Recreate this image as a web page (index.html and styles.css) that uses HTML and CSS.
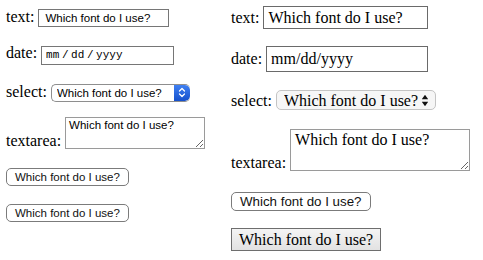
FILE: index.html
```html
<!DOCTYPE html>
<html lang="en">
<head>
    <meta charset="UTF-8">
    <meta name="viewport" content="width=device-width, initial-scale=1.0">
    <title>Which font do I use?</title>
    <link rel="stylesheet" href="styles.css">
</head>
<body>
    <div class="demo">
        <!-- left: controls with their own font -->
        <form class="col col-default">
            <div class="row">
                <label for="d-text">text:</label>
                <input type="text" id="d-text" class="field field-text" value="Which font do I use?">
            </div>
            <div class="row">
                <label for="d-date">date:</label>
                <input type="text" id="d-date" class="field field-date" value="mm / dd / yyyy">
            </div>
            <div class="row">
                <label for="d-select">select:</label>
                <span class="select">
                    <select id="d-select">
                        <option>Which font do I use?</option>
                    </select>
                    <span class="stepper">
                        <svg width="8" height="11" viewBox="0 0 8 11">
                            <path d="M1.5 4 L4 1.5 L6.5 4 M1.5 7 L4 9.5 L6.5 7" fill="none" stroke="#fff" stroke-width="1.3" stroke-linecap="round" stroke-linejoin="round"/>
                        </svg>
                    </span>
                </span>
            </div>
            <div class="row row-area">
                <label for="d-area">textarea:</label>
                <textarea id="d-area" class="area">Which font do I use?</textarea>
            </div>
            <div class="row">
                <button type="button" class="btn">Which font do I use?</button>
            </div>
            <div class="row">
                <button type="button" class="btn">Which font do I use?</button>
            </div>
        </form>

        <!-- right: controls inherit the page font -->
        <form class="col col-inherit">
            <div class="row">
                <label for="i-text">text:</label>
                <input type="text" id="i-text" class="field field-text" value="Which font do I use?">
            </div>
            <div class="row">
                <label for="i-date">date:</label>
                <input type="text" id="i-date" class="field field-date" value="mm/dd/yyyy">
            </div>
            <div class="row">
                <label for="i-select">select:</label>
                <span class="select">
                    <select id="i-select">
                        <option>Which font do I use?</option>
                    </select>
                    <span class="stepper">
                        <svg width="8" height="13" viewBox="0 0 8 13">
                            <path d="M0.8 5.3 L4 0.8 L7.2 5.3 Z M0.8 7.7 L4 12.2 L7.2 7.7 Z" fill="#111"/>
                        </svg>
                    </span>
                </span>
            </div>
            <div class="row row-area">
                <label for="i-area">textarea:</label>
                <textarea id="i-area" class="area">Which font do I use?</textarea>
            </div>
            <div class="row">
                <button type="button" class="btn">Which font do I use?</button>
            </div>
            <div class="row">
                <button type="button" class="btn btn-plain">Which font do I use?</button>
            </div>
        </form>
    </div>
</body>
</html>
```

FILE: styles.css
```css
body {
    margin: 0;
    font-family: "Liberation Serif", "Times New Roman", serif;
    font-size: 16px;
    color: #000;
    background-color: #fff;
}

.demo {
    display: flex;
}

.col {
    display: flex;
    flex-direction: column;
    margin: 0;
}

.col-default {
    width: 225px;
    padding: 9px 0 0 6px;
}

.col-inherit {
    padding: 6px 0 0 0;
}

.row {
    display: flex;
    align-items: baseline;
    gap: 4px;
}

.row-area {
    align-items: flex-end;
}

label {
    line-height: 16px;
}

/* shared control bits */
.field,
.area,
.select,
.btn {
    box-sizing: border-box;
    margin: 0;
    color: #000;
    background-color: #fff;
    outline: none;
}

.field {
    border: 1px solid #767676;
    border-radius: 0;
}

.area {
    border: 1px solid #9a9a9a;
    resize: both;
}

.select {
    display: inline-flex;
    align-items: stretch;
    border-radius: 5px;
    overflow: hidden;
}

.select select {
    flex: 1;
    appearance: none;
    -webkit-appearance: none;
    border: none;
    margin: 0;
    background: transparent;
    color: #000;
    outline: none;
}

.stepper {
    display: flex;
    align-items: center;
    justify-content: center;
}

.btn {
    border: 1px solid #7b7b7b;
    border-radius: 5px;
    padding: 0 8px;
    color: #111;
}

/* left column: small system-ish font */
.col-default .field,
.col-default .area,
.col-default select,
.col-default .btn {
    font-family: "Liberation Sans", Arial, sans-serif;
    font-size: 11.5px;
}

.col-default .row + .row {
    margin-top: 18px;
}

.col-default .row:nth-child(3) {
    margin-top: 19px;
}

.col-default .row:nth-child(4) {
    margin-top: 15px;
}

.col-default .row:nth-child(5) {
    margin-top: 19px;
}

.col-default .field-text {
    width: 131px;
    height: 18px;
    padding: 0 0 0 6px;
}

.col-default .field-date {
    width: 133px;
    height: 19px;
    padding: 0 0 0 4px;
    font-family: "Liberation Mono", "Courier New", monospace;
    font-size: 11px;
    word-spacing: -4px;
}

.col-default .select {
    width: 139px;
    height: 18px;
    border: 1px solid #8e8e8e;
    border-right: none;
}

.col-default .select select {
    padding: 0 0 0 5px;
}

.col-default .stepper {
    width: 16px;
    background: linear-gradient(#3f80f2, #1550cc);
    border-radius: 0 5px 5px 0;
}

.col-default .area {
    width: 140px;
    height: 32px;
    padding: 1px 3px;
}

.col-default .btn {
    height: 18px;
}

/* right column: controls take the serif font */
.col-inherit .field,
.col-inherit .area,
.col-inherit select {
    font-family: inherit;
    font-size: 16px;
}

.col-inherit .btn {
    font-family: "Liberation Sans", Arial, sans-serif;
    font-size: 13.33px;
    height: 19px;
}

.col-inherit .row + .row {
    margin-top: 17px;
}

.col-inherit .row:nth-child(3) {
    margin-top: 18px;
}

.col-inherit .row:nth-child(4) {
    margin-top: 19px;
}

.col-inherit .row:nth-child(5) {
    margin-top: 21px;
}

.col-inherit .field {
    border-color: #6a6a6a;
}

.col-inherit .field-text {
    width: 165px;
    height: 23px;
    padding: 0 0 0 4px;
}

.col-inherit .field-date {
    width: 162px;
    height: 26px;
    padding: 0 0 0 4px;
}

.col-inherit .select {
    width: 160px;
    height: 20px;
    border: 1px solid #c4c4c4;
    background-color: #f6f6f6;
}

.col-inherit .select select {
    padding: 0 0 0 7px;
}

.col-inherit .stepper {
    width: 14px;
    padding-right: 3px;
}

.col-inherit .area {
    width: 180px;
    height: 42px;
    padding: 1px 4px;
}

.col-inherit .btn.btn-plain {
    height: 23px;
    padding: 0 7px;
    font-family: inherit;
    font-size: 16px;
    color: #000;
    border: 1px solid #6e6e6e;
    border-radius: 0;
    background: linear-gradient(#f4f4f4, #e2e2e2);
}
```
